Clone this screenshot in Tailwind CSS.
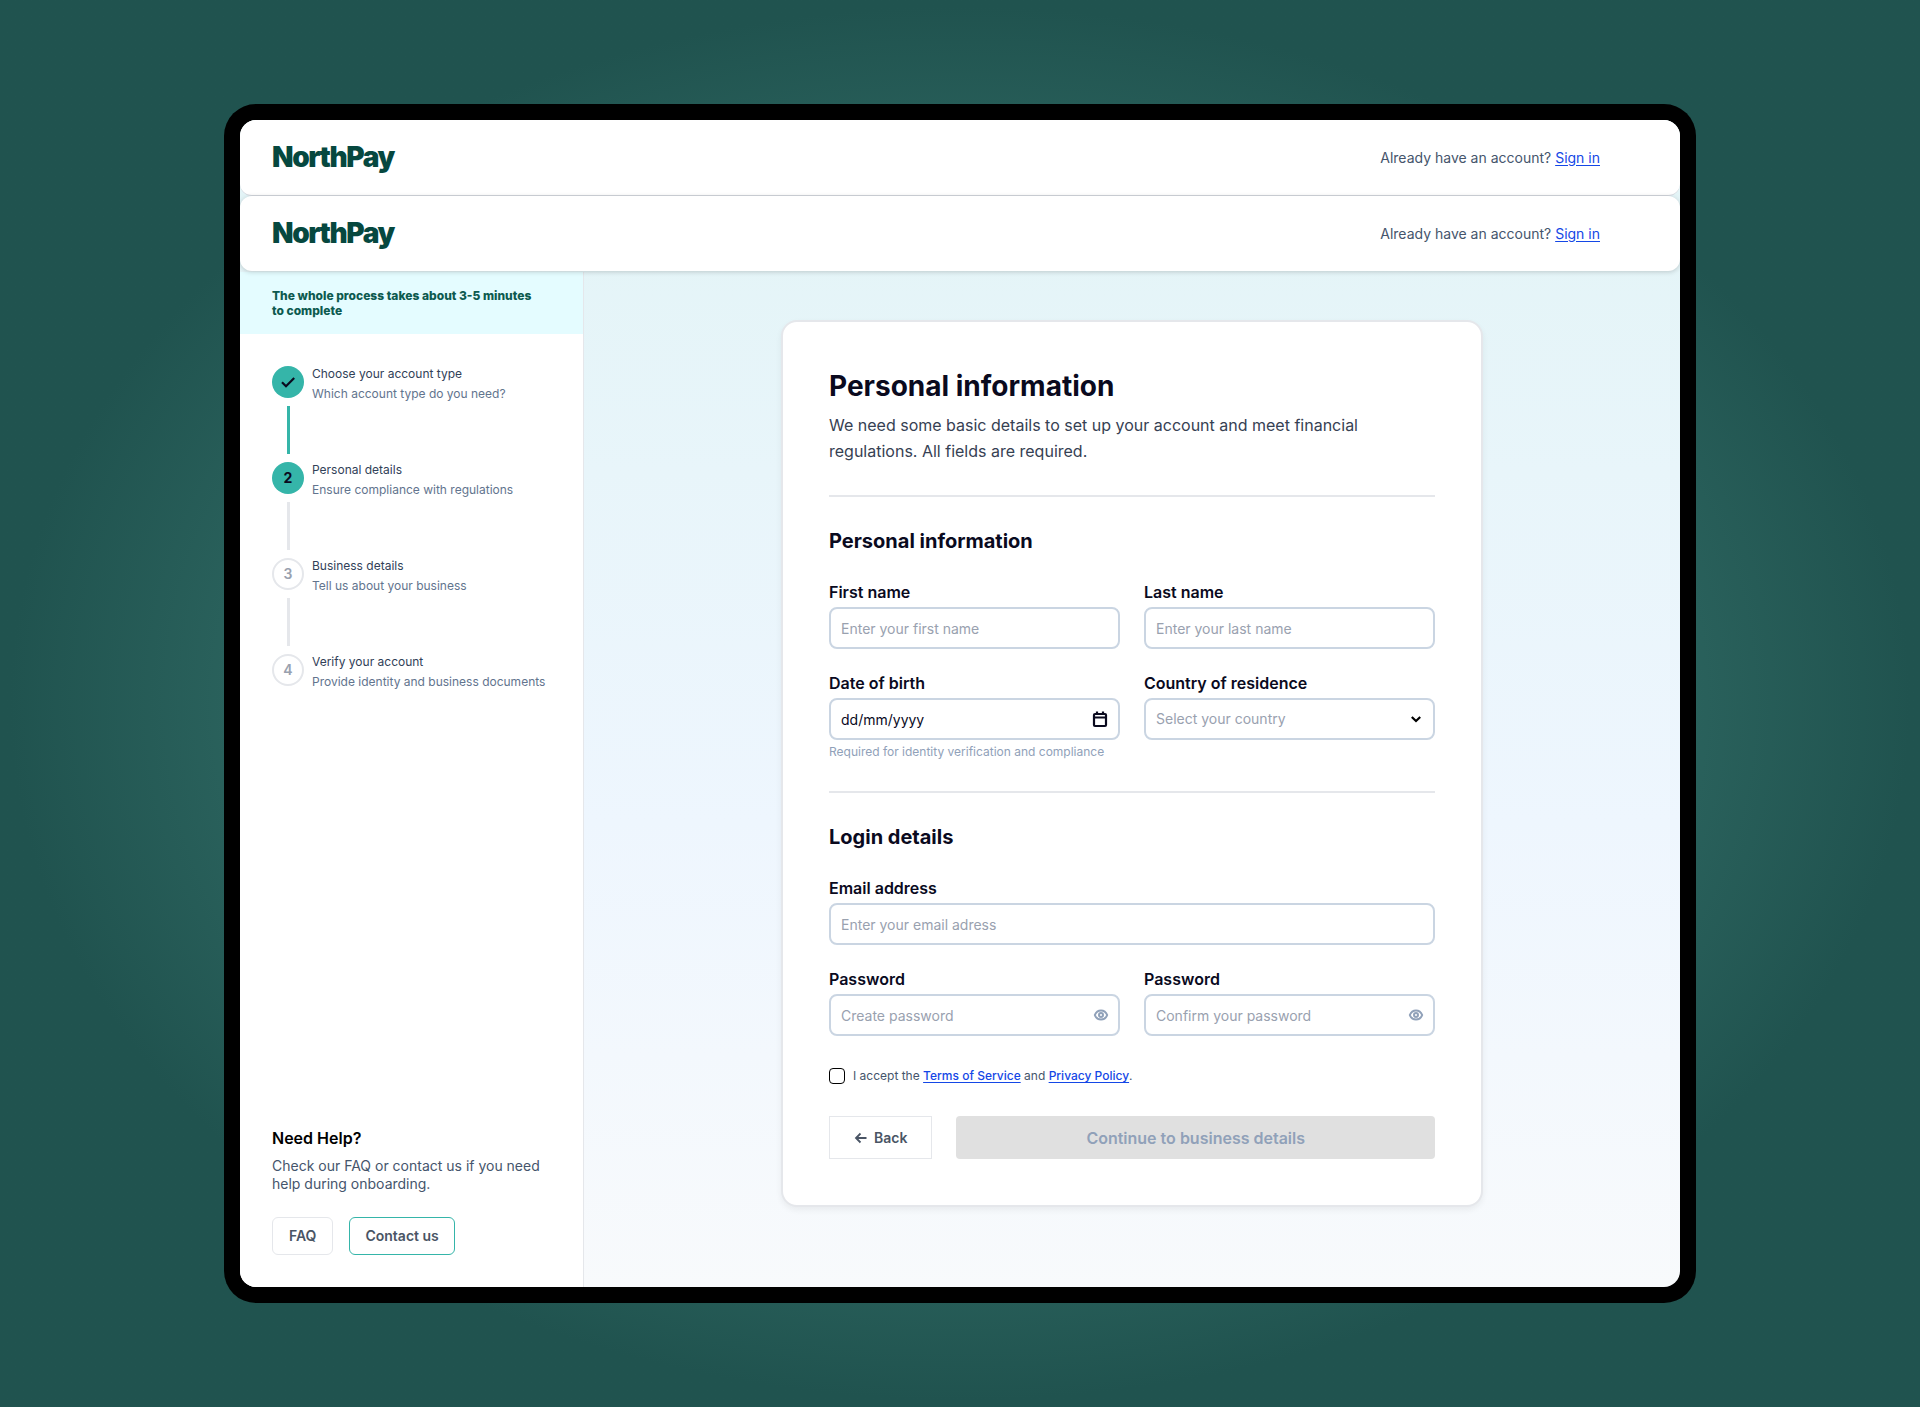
<!DOCTYPE html>
<html lang="en">
<head>
    <meta charset="UTF-8">
    <meta name="viewport" content="width=device-width, initial-scale=1.0">
    <title>NorthPay - Personal information</title>
    <script src="https://cdn.jsdelivr.net/npm/@tailwindcss/browser@4"></script>
</head>
<body class="min-h-screen flex bg-[#20534f] bg-radial from-[#3f7d75] from-30% via-[#2f6963] via-45% to-[#20534f] to-70% px-56 py-26 font-['Inter',sans-serif] text-[#0a0a1e]">
    <!-- Device frame -->
    <div class="flex-1 flex bg-black rounded-[32px] p-4">
        <div class="flex-1 flex flex-col overflow-hidden rounded-2xl bg-linear-to-b from-[#e2f4f6] via-[#eef6fe] via-60% to-[#f8fafc]">
            <!-- Headers -->
            <header class="h-[76px] shrink-0 flex items-center justify-between bg-white border-b border-gray-300 rounded-xl pl-8 pr-20">
                <a href="#" class="pb-0.5 text-[28px] leading-8 font-black tracking-tighter text-[#06483f]">NorthPay</a>
                <p class="text-sm text-slate-600">Already have an account? <a href="#" class="text-blue-700 underline underline-offset-2">Sign in</a></p>
            </header>
            <header class="h-[75px] mb-px shrink-0 z-10 flex items-center justify-between bg-white rounded-xl shadow-[0_1px_5px_rgba(0,0,0,0.18)] pl-8 pr-20">
                <a href="#" class="pb-0.5 text-[28px] leading-8 font-black tracking-tighter text-[#06483f]">NorthPay</a>
                <p class="text-sm text-slate-600">Already have an account? <a href="#" class="text-blue-700 underline underline-offset-2">Sign in</a></p>
            </header>

            <div class="flex-1 flex">
                <!-- Sidebar -->
                <aside class="w-[344px] shrink-0 flex flex-col bg-white border-r border-gray-200">
                    <p class="bg-[#e4fcff] pl-8 pr-12 py-4 text-xs leading-[15px] font-extrabold text-[#0d5a4f]">The whole process takes about 3-5 minutes to complete</p>

                    <!-- Steps -->
                    <ol class="flex flex-col gap-2 px-8 pt-8 text-xs leading-4">
                        <li class="flex gap-2">
                            <div class="flex flex-col items-center gap-2">
                                <span class="size-8 rounded-full bg-[#35b5a9] flex items-center justify-center">
                                    <svg class="size-4" viewBox="0 0 16 16" fill="none" stroke="#0a0a1e" stroke-width="2.200"><path d="M2 8.200l4 4L14.200 4"/></svg>
                                </span>
                                <span class="w-[3px] h-12 bg-[#35b5a9]"></span>
                            </div>
                            <div class="flex flex-col gap-1">
                                <p class="text-slate-700">Choose your account type</p>
                                <p class="text-slate-500">Which account type do you need?</p>
                            </div>
                        </li>
                        <li class="flex gap-2">
                            <div class="flex flex-col items-center gap-2">
                                <span class="size-8 rounded-full bg-[#35b5a9] flex items-center justify-center text-sm font-bold">2</span>
                                <span class="w-[3px] h-12 bg-gray-200"></span>
                            </div>
                            <div class="flex flex-col gap-1">
                                <p class="text-slate-700">Personal details</p>
                                <p class="text-slate-500">Ensure compliance with regulations</p>
                            </div>
                        </li>
                        <li class="flex gap-2">
                            <div class="flex flex-col items-center gap-2">
                                <span class="size-8 rounded-full border-2 border-gray-200 flex items-center justify-center text-sm font-semibold text-gray-400">3</span>
                                <span class="w-[3px] h-12 bg-gray-200"></span>
                            </div>
                            <div class="flex flex-col gap-1">
                                <p class="text-slate-700">Business details</p>
                                <p class="text-slate-500">Tell us about your business</p>
                            </div>
                        </li>
                        <li class="flex gap-2">
                            <span class="size-8 rounded-full border-2 border-gray-200 flex items-center justify-center text-sm font-semibold text-gray-400">4</span>
                            <div class="flex flex-col gap-1">
                                <p class="text-slate-700">Verify your account</p>
                                <p class="text-slate-500">Provide identity and business documents</p>
                            </div>
                        </li>
                    </ol>

                    <!-- Help -->
                    <div class="mt-auto p-8">
                        <h2 class="text-base leading-[21px] font-semibold text-black">Need Help?</h2>
                        <p class="mt-2 text-sm leading-[18px] text-slate-600">Check our FAQ or contact us if you need help during onboarding.</p>
                        <div class="mt-6 flex gap-4 text-sm font-semibold text-gray-600">
                            <button type="button" class="h-[38px] px-4 border border-gray-200 rounded-md">FAQ</button>
                            <button type="button" class="h-[38px] px-[15px] border border-[#35b5a9] rounded-md">Contact us</button>
                        </div>
                    </div>
                </aside>

                <!-- Form -->
                <main class="flex-1 flex justify-center items-start pt-12">
                    <form class="w-full max-w-[702px] bg-white border-2 border-gray-200 rounded-2xl p-[46px] shadow-[0_3px_6px_rgba(0,0,0,0.06)]">
                        <h1 class="text-[28px] leading-9 font-bold">Personal information</h1>
                        <p class="mt-2 text-base leading-[26px] text-gray-700">We need some basic details to set up your account and meet financial regulations. All fields are required.</p>

                        <hr class="my-[31px] border-t-2 border-gray-200">

                        <h2 class="text-xl leading-[26px] font-bold">Personal information</h2>
                        <div class="mt-7 grid grid-cols-2 gap-6 leading-[21px]">
                            <div class="flex flex-col gap-1">
                                <label for="first-name" class="font-semibold">First name</label>
                                <input type="text" id="first-name" placeholder="Enter your first name" class="w-full h-[42px] px-2.5 border-2 border-slate-300 rounded-lg text-sm placeholder:text-gray-400">
                            </div>
                            <div class="flex flex-col gap-1">
                                <label for="last-name" class="font-semibold">Last name</label>
                                <input type="text" id="last-name" placeholder="Enter your last name" class="w-full h-[42px] px-2.5 border-2 border-slate-300 rounded-lg text-sm placeholder:text-gray-400">
                            </div>
                            <div class="flex flex-col gap-1">
                                <label for="birth-date" class="font-semibold">Date of birth</label>
                                <div class="relative">
                                    <input type="text" id="birth-date" placeholder="dd/mm/yyyy" aria-describedby="birth-hint" class="w-full h-[42px] pl-2.5 pr-10 border-2 border-slate-300 rounded-lg text-sm placeholder:text-[#0a0a1e]">
                                    <svg class="absolute right-[11px] inset-y-0 my-auto size-[18px]" viewBox="0 0 18 18" fill="none" stroke="#0a0a1e" stroke-width="2.200" stroke-linejoin="round"><rect x="3" y="4" width="12" height="12" rx="1"/><path d="M3 7.500h12M6 1.500V5M12 1.500V5"/></svg>
                                </div>
                                <p id="birth-hint" class="text-xs leading-4 text-slate-400">Required for identity verification and compliance</p>
                            </div>
                            <div class="flex flex-col gap-1">
                                <label for="country" class="font-semibold">Country of residence</label>
                                <div class="relative">
                                    <select id="country" class="appearance-none w-full h-[42px] pl-2.5 pr-10 border-2 border-slate-300 rounded-lg text-sm text-gray-400">
                                        <option>Select your country</option>
                                    </select>
                                    <svg class="absolute right-3 inset-y-0 my-auto size-3.5 pointer-events-none" viewBox="0 0 14 14" fill="none" stroke="#000" stroke-width="2.200"><path d="M2.800 5L7 9l4.200-4"/></svg>
                                </div>
                            </div>
                        </div>

                        <hr class="my-[31px] border-t-2 border-gray-200">

                        <h2 class="text-xl leading-[26px] font-bold">Login details</h2>
                        <div class="mt-7 grid grid-cols-2 gap-6 leading-[21px]">
                            <div class="col-span-2 flex flex-col gap-1">
                                <label for="email" class="font-semibold">Email address</label>
                                <input type="email" id="email" placeholder="Enter your email adress" class="w-full h-[42px] px-2.5 border-2 border-slate-300 rounded-lg text-sm placeholder:text-gray-400">
                            </div>
                            <div class="flex flex-col gap-1">
                                <label for="password" class="font-semibold">Password</label>
                                <div class="relative">
                                    <input type="password" id="password" placeholder="Create password" class="w-full h-[42px] pl-2.5 pr-10 border-2 border-slate-300 rounded-lg text-sm placeholder:text-gray-400">
                                    <button type="button" aria-label="Show password" class="absolute right-[11px] inset-y-0 my-auto size-4 text-slate-400">
                                        <svg class="size-4" viewBox="0 0 16 16" fill="none" stroke="currentColor" stroke-width="2"><path d="M1.800 8C3 5 5.200 3.400 8 3.400S13 5 14.200 8c-1.200 3-3.400 4.600-6.200 4.600S3 11 1.800 8z"/><circle cx="8" cy="8" r="2"/></svg>
                                    </button>
                                </div>
                            </div>
                            <div class="flex flex-col gap-1">
                                <label for="confirm-password" class="font-semibold">Password</label>
                                <div class="relative">
                                    <input type="password" id="confirm-password" placeholder="Confirm your password" class="w-full h-[42px] pl-2.5 pr-10 border-2 border-slate-300 rounded-lg text-sm placeholder:text-gray-400">
                                    <button type="button" aria-label="Show password" class="absolute right-[11px] inset-y-0 my-auto size-4 text-slate-400">
                                        <svg class="size-4" viewBox="0 0 16 16" fill="none" stroke="currentColor" stroke-width="2"><path d="M1.800 8C3 5 5.200 3.400 8 3.400S13 5 14.200 8c-1.200 3-3.400 4.600-6.200 4.600S3 11 1.800 8z"/><circle cx="8" cy="8" r="2"/></svg>
                                    </button>
                                </div>
                            </div>
                        </div>

                        <div class="mt-8 flex items-center gap-2 text-xs leading-4 text-slate-600">
                            <input type="checkbox" id="terms" class="appearance-none size-4 shrink-0 border border-black rounded-sm bg-white checked:bg-[#35b5a9]">
                            <label for="terms">I accept the <a href="#" class="font-medium text-blue-700 underline underline-offset-2">Terms of Service</a> and <a href="#" class="font-medium text-blue-700 underline underline-offset-2">Privacy Policy</a>.</label>
                        </div>

                        <div class="mt-8 flex gap-6 font-semibold">
                            <button type="button" class="h-[43px] px-6 flex items-center gap-1.5 border border-gray-200 text-sm text-gray-600">
                                <svg class="size-3.5" viewBox="0 0 14 14" fill="none" stroke="currentColor" stroke-width="1.800"><path d="M12.500 7H2M6.500 2.500L2 7l4.500 4.500"/></svg>
                                Back
                            </button>
                            <button type="submit" disabled class="flex-1 h-[43px] rounded bg-[#e0e0e0] text-base text-slate-400">Continue to business details</button>
                        </div>
                    </form>
                </main>
            </div>
        </div>
    </div>
</body>
</html>
